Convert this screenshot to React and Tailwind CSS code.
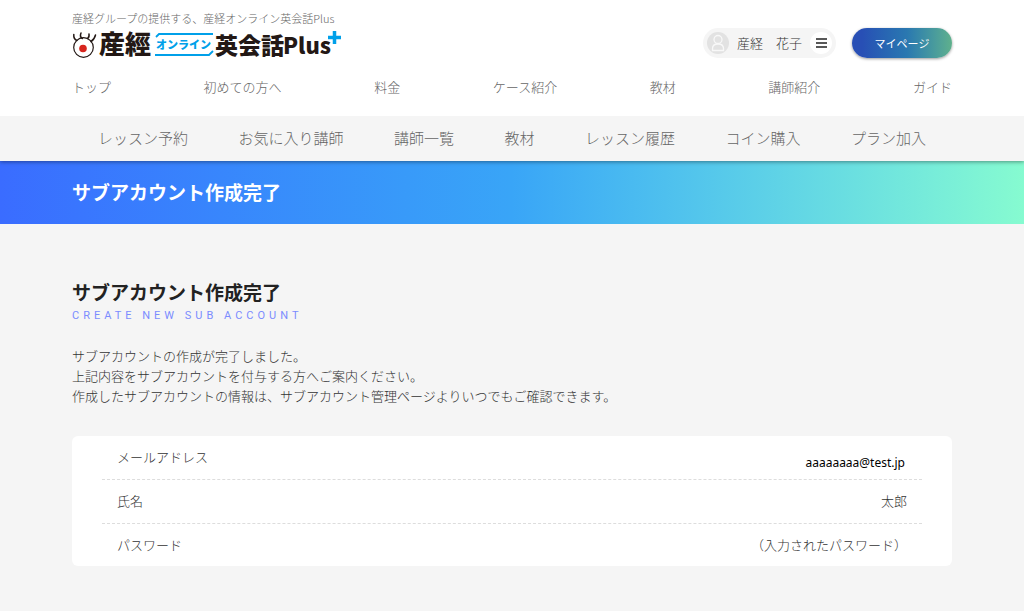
const mainLinks = ["トップ", "初めての方へ", "料金", "ケース紹介", "教材", "講師紹介", "ガイド"];

const memberLinks = [
  "レッスン予約",
  "お気に入り講師",
  "講師一覧",
  "教材",
  "レッスン履歴",
  "コイン購入",
  "プラン加入",
];

function Logo() {
  return (
    <svg
      width="274"
      height="44"
      viewBox="0 -6 274 44"
      role="img"
      aria-label="産經オンライン英会話Plus"
      className="block font-['Noto_Sans_CJK_JP',sans-serif] font-black"
    >
      {/* eye mark */}
      <g fill="none" stroke="#231815" strokeLinecap="round">
        <circle cx="11.500" cy="17.500" r="9.800" strokeWidth="1.2" />
        <path d="M5 10.500C2.500 9.500 1.500 7.500 1.800 4.500" strokeWidth="1.5" />
        <path d="M10.500 8.500C8.300 7.500 8 5.500 9 3" strokeWidth="1.5" />
        <path d="M15.500 8.500C17 7.500 17.300 6 17 4" strokeWidth="1.5" />
        <path d="M19 11.500C21.500 10 22.800 8 23.500 5" strokeWidth="1.5" />
      </g>
      <circle cx="11" cy="18.500" r="3.800" fill="#d7261e" />

      <text x="27" y="24" fontSize="26" fill="#231815">産經</text>

      <path d="M84 7L87 4H141M83 25H137L141 21" fill="none" stroke="#00a0e9" strokeWidth="1.8" />
      <text x="84" y="19" fontSize="11" fill="#00a0e9">オンライン</text>

      <text x="143" y="24" fontSize="23" fill="#231815">英会話</text>
      <text x="211" y="24" fontSize="22" fill="#231815">Plus</text>
      <path d="M262.500 1V14M256 7.500H269" stroke="#00a0e9" strokeWidth="3.500" />
    </svg>
  );
}

function UserMenu() {
  return (
    <div className="flex items-center rounded-full bg-[#f5f5f5] h-[30px] pl-1 pr-1">
      <svg width="22" height="22" viewBox="0 0 22 22" aria-hidden="true">
        <circle cx="11" cy="11" r="11" fill="#e2e2e2" />
        <g fill="none" stroke="#f8f8f8" strokeWidth="1.3">
          <circle cx="11" cy="7.500" r="4" />
          <path d="M5.500 18.500V16.500C5.500 13.500 7.500 12 11 12S16.500 13.500 16.500 16.500V18.500Z" />
        </g>
      </svg>
      <span className="ml-2 whitespace-pre text-[13px]">産経　花子</span>
      <button type="button" aria-label="メニュー" className="ml-2 flex size-[22px] items-center justify-center rounded-full bg-white">
        <svg width="11" height="10" viewBox="0 0 11 10" stroke="#222" strokeWidth="1.6">
          <path d="M0 1H11M0 5H11M0 9H11" />
        </svg>
      </button>
    </div>
  );
}

function DetailRow({ label, children }) {
  return (
    <div className="flex h-11 justify-between border-b border-dashed border-[#ddd] px-[15px] pt-[11px] leading-5 last:h-[42px] last:border-b-0">
      <dt>{label}</dt>
      <dd>{children}</dd>
    </div>
  );
}

export default function App() {
  return (
    <div className="min-h-screen bg-[#f5f5f5] font-['Noto_Sans_CJK_JP',sans-serif] text-[13px] font-light text-[#333]">
      <header className="relative bg-white shadow-[0_1px_4px_rgba(0,0,0,0.4)]">
        <div className="mx-[72px] h-[116px] pt-2.5">
          <div className="flex h-[67px] justify-between">
            <div>
              <p className="text-[11px] leading-4 text-[#666]">
                産経グループの提供する、産経オンライン英会話Plus
              </p>
              <a href="#" className="-mt-0.5 block">
                <Logo />
              </a>
            </div>
            <div className="mt-[18px] flex items-start gap-4">
              <UserMenu />
              <button
                type="button"
                className="h-[30px] w-[100px] rounded-full bg-linear-to-r from-[#284fb5] from-10% via-[#2a78b0] via-55% to-[#5fb08c] text-[11px] font-normal text-white shadow-[0_1px_3px_rgba(0,0,0,0.4)]"
              >
                マイページ
              </button>
            </div>
          </div>
          <nav className="flex justify-between leading-5 text-[#666]">
            {mainLinks.map((link) => (
              <a key={link} href="#">{link}</a>
            ))}
          </nav>
        </div>
        <nav className="flex h-[45px] items-center justify-between bg-[#f5f5f5] px-[98px] pb-px text-[15px] text-[#666]">
          {memberLinks.map((link) => (
            <a key={link} href="#">{link}</a>
          ))}
        </nav>
      </header>

      <div className="flex h-[63px] items-center bg-linear-to-r from-[#3a6cff] via-[#39a5f7] via-50% to-[#86fbd0] px-[72px]">
        <p className="text-[19px] font-bold text-white">サブアカウント作成完了</p>
      </div>

      <main className="mx-[72px] pt-14 pb-11">
        <h1 className="text-[19px] leading-6 font-bold text-[#222]">サブアカウント作成完了</h1>
        <p className="mt-1 font-[Roboto,sans-serif] text-[11px] leading-4 font-normal tracking-[4px] text-[#7b8cff]">
          CREATE NEW SUB ACCOUNT
        </p>
        <p className="mt-[22px] leading-5">
          サブアカウントの作成が完了しました。
          <br />
          上記内容をサブアカウントを付与する方へご案内ください。
          <br />
          作成したサブアカウントの情報は、サブアカウント管理ページよりいつでもご確認できます。
        </p>
        <dl className="mt-[30px] rounded-md bg-white px-[30px]">
          <DetailRow label="メールアドレス">
            <span className="block pt-1.5 pr-0.5 font-['Noto_Sans',sans-serif] text-[12px] font-normal text-black">
              aaaaaaaa@test.jp
            </span>
          </DetailRow>
          <DetailRow label="氏名">太郎</DetailRow>
          <DetailRow label="パスワード">（入力されたパスワード）</DetailRow>
        </dl>
      </main>
    </div>
  );
}
